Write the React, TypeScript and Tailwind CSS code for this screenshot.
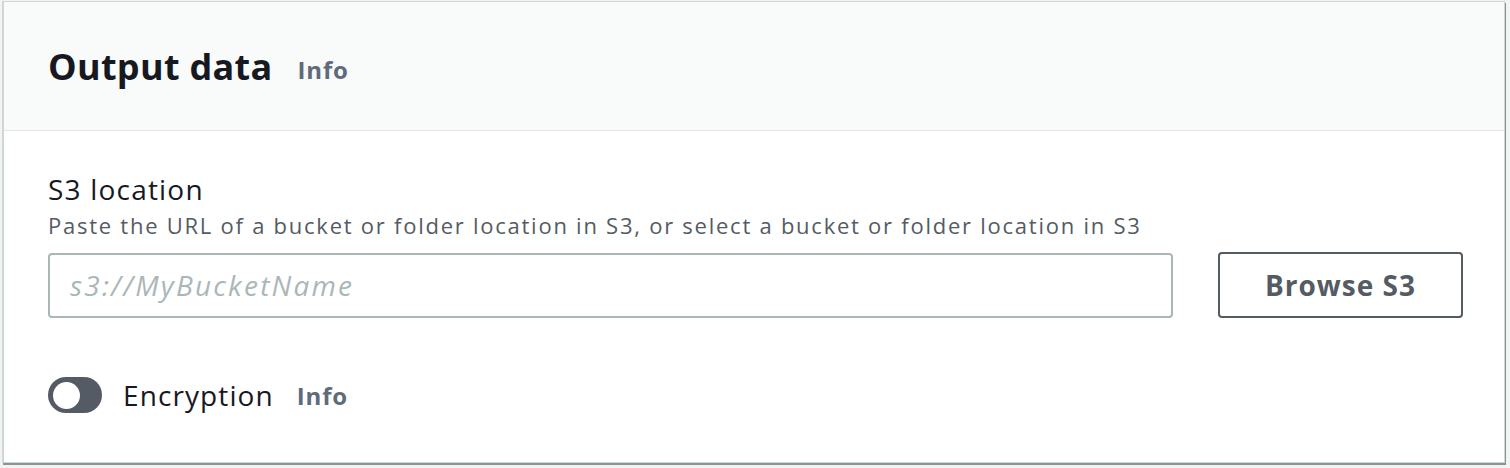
const font = { fontFamily: '"Open Sans", "Noto Sans", sans-serif' };

export default function App() {
  return (
    <div className="h-[468px] w-[1510px] bg-[#f2f3f3] pl-[2px] pt-px" style={font}>
      <div className="h-[462px] w-[1503px] border border-l-2 border-[#d0d5d5] bg-white shadow-[1px_2px_0_#879596]">
        <div className="flex h-[129px] items-center border-b border-[#e3e6e6] bg-[#f9fafa] pl-[44px] pt-[2px]">
          <h2 className="text-[36px] font-bold leading-none tracking-[0.3px] text-[#16191f]">Output data</h2>
          <span className="ml-[25px] mt-[6px] text-[24px] font-bold tracking-[0.8px] text-[#5f6b7a]">Info</span>
        </div>
        <div className="px-[44px] pt-[40px]">
          <div className="text-[28px] leading-[36px] tracking-[1.2px] text-[#16191f]">S3 location</div>
          <div className="mt-[2px] text-[22px] leading-[32px] tracking-[1.75px] text-[#545b64]">
            Paste the URL of a bucket or folder location in S3, or select a bucket or folder location in S3
          </div>
          <div className="mt-[11px] flex items-center">
            <input
              className="h-[65px] w-[1125px] shrink-0 rounded-[4px] border-2 border-[#aab7b8] px-[20px] text-[28px] italic tracking-[2.2px] text-[#16191f] outline-none placeholder:text-[#aab7b8]"
              placeholder="s3://MyBucketName"
              style={font}
            />
            <button className="ml-[45px] h-[66px] w-[245px] shrink-0 rounded-[4px] border-2 border-[#545b64] text-[28px] font-bold tracking-[1px] text-[#545b64]">
              Browse S3
            </button>
          </div>
          <div className="mt-[56px] flex items-center">
            <div className="flex h-[36px] w-[54px] items-center rounded-full bg-[#545b64] pl-[5px]">
              <div className="h-[27px] w-[27px] rounded-full bg-white" />
            </div>
            <span className="ml-[21px] text-[28px] tracking-[1.1px] text-[#16191f]">Encryption</span>
            <span className="ml-[23px] mt-[2px] text-[24px] font-bold tracking-[0.8px] text-[#5f6b7a]">Info</span>
          </div>
        </div>
      </div>
    </div>
  );
}
